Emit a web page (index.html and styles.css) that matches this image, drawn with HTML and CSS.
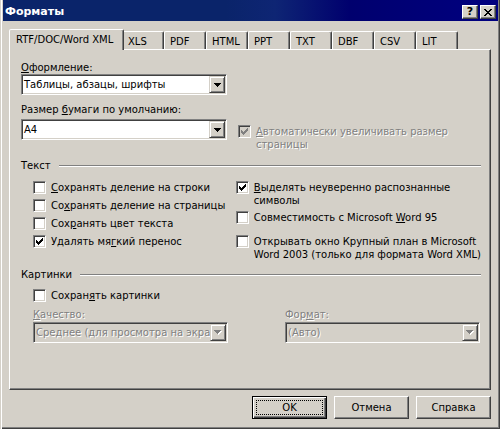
FILE: index.html
```html
<!DOCTYPE html>
<html lang="ru">
<head>
    <meta charset="UTF-8">
    <title>Форматы</title>
    <link rel="stylesheet" href="styles.css">
</head>
<body>
    <div class="window">
        <div class="titlebar">
            <span class="title">Форматы</span>
            <div class="caption-buttons">
                <span class="caption-btn help">?</span>
                <span class="caption-btn">
                    <svg width="8" height="7" viewBox="0 0 8 7"><path d="M0 0h2v1h-2z M6 0h2v1h-2z M1 1h2v1h-2z M5 1h2v1h-2z M2 2h4v1h-4z M3 3h2v1h-2z M2 4h4v1h-4z M1 5h2v1h-2z M5 5h2v1h-2z M0 6h2v1h-2z M6 6h2v1h-2z" fill="#000"/></svg>
                </span>
            </div>
        </div>

        <div class="tabs">
            <div class="tab tab-active">RTF/DOC/Word XML</div>
            <div class="tab">XLS</div>
            <div class="tab">PDF</div>
            <div class="tab">HTML</div>
            <div class="tab">PPT</div>
            <div class="tab">TXT</div>
            <div class="tab">DBF</div>
            <div class="tab">CSV</div>
            <div class="tab">LIT</div>
        </div>

        <div class="sheet">
            <div class="lbl"><u>О</u>формление:</div>
            <div class="combo combo-wide">
                <span class="combo-text">Таблицы, абзацы, шрифты</span>
                <span class="drop"><svg width="7" height="4" viewBox="0 0 7 4"><path d="M0 0h7v1h-1v1h-1v1h-1v1h-1v-1h-1v-1h-1v-1h-1z" fill="#000"/></svg></span>
            </div>

            <div class="paper-row">
                <div class="paper-col">
                    <div class="lbl lbl-paper">Размер <u>б</u>умаги по умолчанию:</div>
                    <div class="combo combo-wide">
                        <span class="combo-text">A4</span>
                        <span class="drop"><svg width="7" height="4" viewBox="0 0 7 4"><path d="M0 0h7v1h-1v1h-1v1h-1v1h-1v-1h-1v-1h-1v-1h-1z" fill="#000"/></svg></span>
                    </div>
                </div>
                <div class="check check-auto">
                    <span class="box box-disabled"><svg width="7" height="7" viewBox="0 0 7 7"><path d="M0 2h1v1h1v1h1v-1h1v-1h1v-1h1v-1h1v3h-1v1h-1v1h-1v1h-1v1h-1v-1h-1v-1h-1z" fill="#808080"/></svg></span>
                    <span class="disabled-text"><u>А</u>втоматически увеличивать размер<br>страницы</span>
                </div>
            </div>

            <div class="group-head">
                <span>Текст</span>
                <span class="etch"></span>
            </div>
            <div class="group-cols">
                <div class="col col-left">
                    <div class="check"><span class="box"></span><span><u>С</u>охранять деление на строки</span></div>
                    <div class="check"><span class="box"></span><span>Со<u>х</u>ранять деление на страницы</span></div>
                    <div class="check"><span class="box"></span><span>Сох<u>р</u>анять цвет текста</span></div>
                    <div class="check">
                        <span class="box"><svg width="7" height="7" viewBox="0 0 7 7"><path d="M0 2h1v1h1v1h1v-1h1v-1h1v-1h1v-1h1v3h-1v1h-1v1h-1v1h-1v1h-1v-1h-1v-1h-1z" fill="#000"/></svg></span>
                        <span>Удалять мя<u>г</u>кий перенос</span>
                    </div>
                </div>
                <div class="col col-right">
                    <div class="check">
                        <span class="box"><svg width="7" height="7" viewBox="0 0 7 7"><path d="M0 2h1v1h1v1h1v-1h1v-1h1v-1h1v-1h1v3h-1v1h-1v1h-1v1h-1v1h-1v-1h-1v-1h-1z" fill="#000"/></svg></span>
                        <span><u>В</u>ыделять неуверенно распознанные<br>символы</span>
                    </div>
                    <div class="check check-word95"><span class="box"></span><span>Совместимость с Microsoft <u>W</u>ord 95</span></div>
                    <div class="check check-zoom"><span class="box"></span><span>Открывать окно Крупный план в Microsoft<br>Word 2003 (только для формата Word XML)</span></div>
                </div>
            </div>

            <div class="group-head group-pictures">
                <span>Картинки</span>
                <span class="etch"></span>
            </div>
            <div class="pictures">
                <div class="check"><span class="box"></span><span>Сохран<u>я</u>ть картинки</span></div>
                <div class="pic-fields">
                    <div class="pic-field">
                        <div class="lbl lbl-pic disabled-text"><u>К</u>ачество:</div>
                        <div class="combo combo-disabled">
                            <span class="combo-text disabled-text">Среднее (для просмотра на экране)</span>
                            <span class="drop"><svg width="8" height="5" viewBox="0 0 8 5"><path d="M1 1h7v1h-1v1h-1v1h-1v1h-1v-1h-1v-1h-1v-1h-1z" fill="#fff"/><path d="M0 0h7v1h-1v1h-1v1h-1v1h-1v-1h-1v-1h-1v-1h-1z" fill="#808080"/></svg></span>
                        </div>
                    </div>
                    <div class="pic-field">
                        <div class="lbl lbl-pic disabled-text">Фор<u>м</u>ат:</div>
                        <div class="combo combo-disabled">
                            <span class="combo-text disabled-text">(Авто)</span>
                            <span class="drop"><svg width="8" height="5" viewBox="0 0 8 5"><path d="M1 1h7v1h-1v1h-1v1h-1v1h-1v-1h-1v-1h-1v-1h-1z" fill="#fff"/><path d="M0 0h7v1h-1v1h-1v1h-1v1h-1v-1h-1v-1h-1v-1h-1z" fill="#808080"/></svg></span>
                        </div>
                    </div>
                </div>
            </div>
        </div>

        <div class="buttons">
            <button type="button" class="btn btn-default">OK<span class="focus"></span></button>
            <button type="button" class="btn">Отмена</button>
            <button type="button" class="btn">Справка</button>
        </div>
    </div>
</body>
</html>
```

FILE: styles.css
```css
* {
    margin: 0;
    padding: 0;
    box-sizing: border-box;
}

body {
    font-family: "DejaVu Sans", sans-serif;
    font-size: 10px;
    line-height: 13px;
    color: #000;
    background: #d4d0c8;
}

.window {
    width: 500px;
    height: 429px;
    padding: 0 2px 0 3px;
    background: #d4d0c8;
    box-shadow: inset 1px 0 #d4d0c8, inset 2px 0 #fff, inset -1px -1px #404040, inset -2px -2px #808080;
}

/* заголовок окна */
.titlebar {
    height: 21px;
    display: flex;
    justify-content: space-between;
    align-items: flex-start;
    padding: 5px 2px 0 2px;
    background: linear-gradient(90deg, #0a246a 0%, #0a246a 45%, #0e2574 55%, #00006e 70%, #000080 100%);
}

.title {
    color: #fff;
    font-weight: bold;
    font-size: 11px;
    line-height: 14px;
}

.caption-buttons {
    display: flex;
    gap: 2px;
}

.caption-btn {
    width: 16px;
    height: 14px;
    display: flex;
    align-items: center;
    justify-content: center;
    background: #d4d0c8;
    border: 1px solid;
    border-color: #fff #404040 #404040 #fff;
    box-shadow: inset -1px -1px #808080;
}

.help {
    font-weight: bold;
    font-size: 11px;
    line-height: 12px;
}

/* вкладки */
.tabs {
    display: flex;
    align-items: flex-end;
    height: 20px;
    margin-top: 8px;
    padding-left: 8px;
}

.tab {
    width: 42px;
    height: 18px;
    padding: 3px 0 0 5px;
    white-space: nowrap;
    border: 1px solid;
    border-bottom: 0;
    border-color: #fff #404040 transparent #fff;
    border-radius: 2px 2px 0 0;
    box-shadow: inset -1px 0 #808080;
}

.tab-active {
    width: 115px;
    height: 21px;
    margin: 0 -2px -1px;
    padding-left: 6px;
    position: relative;
    z-index: 1;
    background: #d4d0c8;
}

.sheet {
    width: 482px;
    height: 341px;
    margin-left: 6px;
    padding: 11px 9px 0 11px;
    border: 1px solid;
    border-color: #fff #404040 #404040 #fff;
    box-shadow: inset -1px -1px #808080;
}

.lbl {
    height: 13px;
    white-space: nowrap;
}

.lbl-paper {
    margin-bottom: 3px;
}

.lbl-pic {
    margin-bottom: 1px;
}

/* выпадающие списки */
.combo {
    display: flex;
    height: 21px;
    padding: 1px;
    background: #fff;
    border: 1px solid;
    border-color: #808080 #fff #fff #808080;
    box-shadow: inset 1px 1px #404040, inset -1px -1px #d4d0c8;
}

.combo-wide {
    width: 206px;
}

.combo-disabled {
    background: #d4d0c8;
}

.combo-text {
    flex: 1;
    padding: 1px 0 0 1px;
    line-height: 16px;
    white-space: nowrap;
    overflow: hidden;
}

.drop {
    flex: none;
    width: 16px;
    height: 17px;
    display: flex;
    align-items: center;
    justify-content: center;
    background: #d4d0c8;
    border: 1px solid;
    border-color: #d4d0c8 #404040 #404040 #d4d0c8;
    box-shadow: inset 1px 1px #fff, inset -1px -1px #808080;
}

.drop svg {
    display: block;
}

.paper-row {
    display: flex;
    gap: 11px;
    margin-top: 8px;
}

.check-auto {
    margin-top: 22px;
}

/* флажки */
.check {
    display: flex;
    align-items: flex-start;
    gap: 5px;
    white-space: nowrap;
}

.box {
    flex: none;
    width: 13px;
    height: 13px;
    padding: 2px;
    background: #fff;
    border: 1px solid;
    border-color: #808080 #fff #fff #808080;
    box-shadow: inset 1px 1px #404040, inset -1px -1px #d4d0c8;
}

.box svg {
    display: block;
}

.box-disabled {
    background: #d4d0c8;
}

.disabled-text {
    color: #808080;
    text-shadow: 1px 1px 0 #fff;
}

.group-head {
    display: flex;
    align-items: center;
    gap: 8px;
    height: 13px;
    margin-top: 8px;
}

.group-pictures {
    margin-top: 7px;
}

.etch {
    flex: 1;
    height: 2px;
    border-top: 1px solid #808080;
    border-bottom: 1px solid #fff;
}

.group-cols {
    display: flex;
    margin-top: 9px;
    padding-left: 12px;
}

.col {
    display: flex;
    flex-direction: column;
}

.col-left {
    width: 205px;
    gap: 5px;
}

.check-word95 {
    margin-top: 4px;
}

.check-zoom {
    margin-top: 11px;
}

.pictures {
    margin-top: 8px;
    padding-left: 12px;
}

.pic-fields {
    display: flex;
    gap: 57px;
    margin-top: 6px;
}

.pic-field {
    width: 195px;
}

/* кнопки */
.buttons {
    display: flex;
    justify-content: flex-end;
    gap: 7px;
    margin-top: 6px;
    padding-right: 7px;
}

.btn {
    position: relative;
    width: 75px;
    height: 23px;
    display: flex;
    align-items: center;
    justify-content: center;
    font: inherit;
    color: #000;
    background: #d4d0c8;
    border: 1px solid;
    border-color: #fff #404040 #404040 #fff;
    box-shadow: inset -1px -1px #808080;
}

.btn-default {
    border-color: #000;
    box-shadow: inset 1px 1px #fff, inset -1px -1px #404040, inset -2px -2px #808080;
}

.focus {
    position: absolute;
    inset: 3px;
    border: 1px dotted #000;
}
```
